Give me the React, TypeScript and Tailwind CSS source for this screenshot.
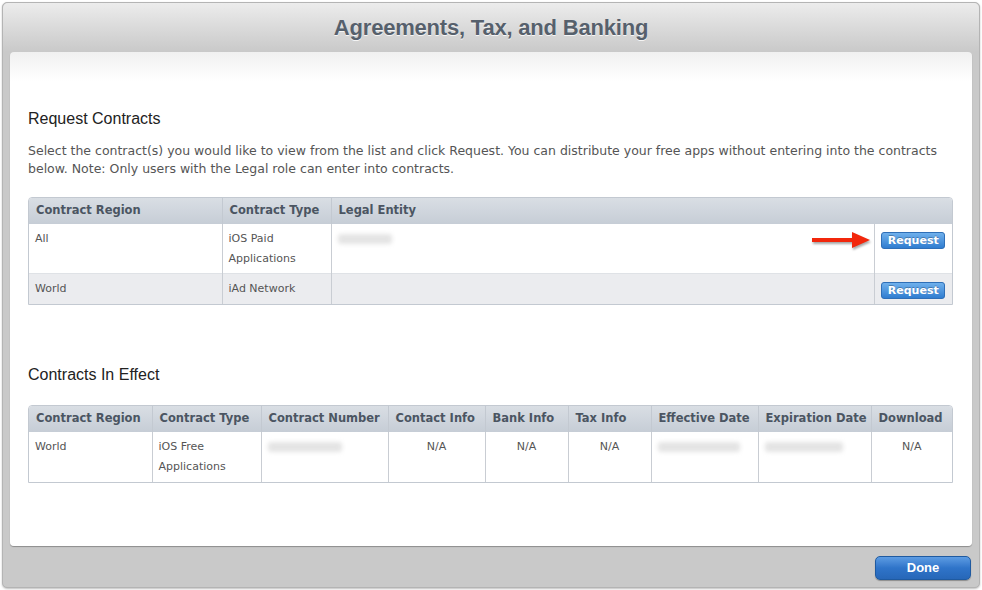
import React from 'react';

const verdana = { fontFamily: '"DejaVu Sans", Verdana, sans-serif' };
const helvetica = { fontFamily: '"Liberation Sans", Arial, sans-serif' };

function Blur({ w }: { w: number }) {
  return <span className="inline-block h-[10px] rounded-[3px] bg-[#e4e4e4] blur-[2px] align-middle" style={{ width: w }} />;
}

function SmallButton() {
  return (
    <button className="h-[17px] w-[64px] rounded-[3px] border border-[#2f6fb7] bg-gradient-to-b from-[#6fb0ec] to-[#2f7dd0] text-[11px] font-bold leading-none text-white [text-shadow:0_-1px_0_rgba(0,0,0,0.25)]">
      Request
    </button>
  );
}

function Arrow() {
  return (
    <svg width="62" height="20" viewBox="0 0 62 20" className="absolute right-[2px] top-[6px] drop-shadow-[1px_2px_1px_rgba(0,0,0,0.35)]">
      <path d="M2 8 H42 V2 L60 10 L42 18 V12 H2 Z" fill="#f2270c" />
    </svg>
  );
}

const th = 'border-l border-[#c3c9d1] px-[7px] text-left text-[11.5px] font-bold text-[#4b5562] first:border-l-0 whitespace-nowrap';
const td = 'border-l border-[#c9cdd3] px-[6px] align-top text-[11px] text-[#555] first:border-l-0';

export default function App() {
  return (
    <div className="h-[590px] w-[982px] bg-white p-[2px]" style={verdana}>
      <div className="flex h-[586px] w-[978px] flex-col rounded-[5px] border border-[#b4b4b4] bg-[#c9c9c9] shadow-[0_1px_2px_rgba(0,0,0,0.25)]">
        {/* Header */}
        <div className="flex h-[49px] items-center justify-center rounded-t-[5px] bg-gradient-to-b from-[#ececec] to-[#c9c9c9]">
          <h1 className="text-[22px] font-bold tracking-[-0.2px] text-[#56606c] [text-shadow:0_1px_0_rgba(255,255,255,0.8)]" style={helvetica}>
            Agreements, Tax, and Banking
          </h1>
        </div>

        {/* Panel */}
        <div className="mx-[7px] h-[494px] rounded-[4px] bg-gradient-to-b from-[#f0f0f0] via-white via-[6%] to-white px-[18px] pt-[57px] shadow-[0_1px_1px_rgba(0,0,0,0.3)]">
          <h2 className="text-[16px] leading-[20px] text-[#222]" style={helvetica}>
            Request Contracts
          </h2>
          <p className="mt-[13px] text-[12.5px] leading-[18px] text-[#555]">
            Select the contract(s) you would like to view from the list and click Request. You can distribute your free apps without entering into the contracts below. Note: Only users with the Legal role can enter into contracts.
          </p>

          <div className="mt-[19px] w-[925px] overflow-hidden rounded-t-[4px] border border-[#c3c9d1]">
            <table className="w-full border-collapse">
              <thead>
                <tr className="h-[26px] bg-gradient-to-b from-[#d9dee4] to-[#c6cdd6]">
                  <th className={`${th} w-[193px]`}>Contract Region</th>
                  <th className={`${th} w-[109px]`}>Contract Type</th>
                  <th className={th} colSpan={2}>Legal Entity</th>
                </tr>
              </thead>
              <tbody>
                <tr className="h-[49px] bg-white leading-[20px]">
                  <td className={`${td} pt-[5px]`}>All</td>
                  <td className={`${td} pt-[5px]`}>iOS Paid<br />Applications</td>
                  <td className={`${td} relative pt-[5px]`}>
                    <Blur w={54} />
                    <Arrow />
                  </td>
                  <td className={`${td} w-[78px] pt-[7px] text-center`}>
                    <SmallButton />
                  </td>
                </tr>
                <tr className="h-[31px] border-t border-[#dfe2e6] bg-[#ebecef] leading-[20px]">
                  <td className={`${td} pt-[5px]`}>World</td>
                  <td className={`${td} pt-[5px]`}>iAd Network</td>
                  <td className={td}></td>
                  <td className={`${td} pt-[7px] text-center`}>
                    <SmallButton />
                  </td>
                </tr>
              </tbody>
            </table>
          </div>

          <h2 className="mt-[60px] text-[16px] leading-[20px] text-[#222]" style={helvetica}>
            Contracts In Effect
          </h2>

          <div className="mt-[20px] w-[925px] overflow-hidden rounded-t-[4px] border border-[#c3c9d1]">
            <table className="w-full table-fixed border-collapse">
              <thead>
                <tr className="h-[26px] bg-gradient-to-b from-[#d9dee4] to-[#c6cdd6]">
                  <th className={`${th} w-[123px]`}>Contract Region</th>
                  <th className={`${th} w-[109px]`}>Contract Type</th>
                  <th className={`${th} w-[127px]`}>Contract Number</th>
                  <th className={`${th} w-[97px]`}>Contact Info</th>
                  <th className={`${th} w-[83px]`}>Bank Info</th>
                  <th className={`${th} w-[83px]`}>Tax Info</th>
                  <th className={`${th} w-[107px]`}>Effective Date</th>
                  <th className={`${th} w-[113px]`}>Expiration Date</th>
                  <th className={th}>Download</th>
                </tr>
              </thead>
              <tbody>
                <tr className="h-[50px] bg-white leading-[20px]">
                  <td className={`${td} pt-[5px]`}>World</td>
                  <td className={`${td} pt-[5px]`}>iOS Free<br />Applications</td>
                  <td className={`${td} pt-[5px]`}><Blur w={74} /></td>
                  <td className={`${td} pt-[5px] text-center`}>N/A</td>
                  <td className={`${td} pt-[5px] text-center`}>N/A</td>
                  <td className={`${td} pt-[5px] text-center`}>N/A</td>
                  <td className={`${td} pt-[5px]`}><Blur w={82} /></td>
                  <td className={`${td} pt-[5px]`}><Blur w={78} /></td>
                  <td className={`${td} pt-[5px] text-center`}>N/A</td>
                </tr>
              </tbody>
            </table>
          </div>
        </div>

        {/* Footer */}
        <div className="flex flex-1 items-center justify-end px-[8px] pt-[2px]">
          <button
            className="h-[24px] w-[96px] rounded-[5px] border border-[#1f5aa0] bg-gradient-to-b from-[#5d9ce3] via-[#2f74c9] to-[#2767b8] text-[13px] font-bold text-white shadow-[0_1px_1px_rgba(0,0,0,0.3)]"
            style={helvetica}
          >
            Done
          </button>
        </div>
      </div>
    </div>
  );
}
